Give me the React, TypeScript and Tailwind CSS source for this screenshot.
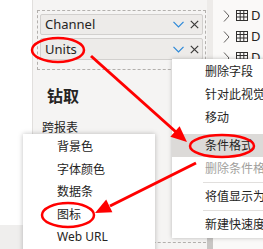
import React from "react";

const font = "font-['Noto_Sans','Noto_Sans_CJK_SC',sans-serif]";

function Chevron() {
  return (
    <svg width="11" height="7" viewBox="0 0 11 7" className="shrink-0">
      <path d="M0.5 0.8 L5.5 6 L10.5 0.8" fill="none" stroke="#2b88d8" strokeWidth="1.2" />
    </svg>
  );
}

function XIcon() {
  return (
    <svg width="9" height="9" viewBox="0 0 9 9" className="shrink-0">
      <path d="M0.8 0.8 L8.2 8.2 M8.2 0.8 L0.8 8.2" fill="none" stroke="#3b3a39" strokeWidth="1.2" />
    </svg>
  );
}

function Pill({ label, h }: { label: string; h: string }) {
  return (
    <div className={`flex items-center ${h} bg-[#edebe9] border border-[#d2d0ce] rounded-[2px] pl-[4px] pr-[3px]`}>
      <span className="text-[13px] leading-none text-[#252423] flex-1">{label}</span>
      <div className="flex items-center gap-[6px]">
        <Chevron />
        <XIcon />
      </div>
    </div>
  );
}

function TableIcon() {
  return (
    <svg width="12" height="11" viewBox="0 0 12 11" className="shrink-0">
      <rect x="0.5" y="0.5" width="11" height="10" fill="none" stroke="#323130" strokeWidth="1" />
      <path d="M0.5 3.5 H11.5 M0.5 7 H11.5 M4.2 0.5 V10.5 M7.8 0.5 V10.5" stroke="#323130" strokeWidth="1" />
    </svg>
  );
}

function FieldRow() {
  return (
    <div className="flex items-center h-[21px] pl-[10px]">
      <svg width="7" height="12" viewBox="0 0 7 12" className="shrink-0">
        <path d="M1 0.5 L6 6 L1 11.5" fill="none" stroke="#605e5c" strokeWidth="1" />
      </svg>
      <div className="ml-[6px]">
        <TableIcon />
      </div>
      <span className="ml-[3px] text-[13px] leading-none text-[#252423]">D</span>
    </div>
  );
}

function MenuItem({ label, active, disabled }: { label: string; active?: boolean; disabled?: boolean }) {
  return (
    <div
      className={`flex items-center h-[23px] pl-[33px] whitespace-nowrap text-[12px] leading-none ${
        active ? "bg-[#dcdad8]" : ""
      } ${disabled ? "text-[#a19f9d]" : "text-[#252423]"}`}
    >
      {label}
    </div>
  );
}

function Sep({ line }: { line?: boolean }) {
  return (
    <div className="h-[5px] flex items-center pl-[31px]">
      {line ? <div className="h-px w-full bg-[#e1dfdd]" /> : null}
    </div>
  );
}

function SubItem({ label }: { label: string }) {
  return (
    <div className="flex items-center h-[22.5px] pl-[34px] whitespace-nowrap text-[12px] leading-none text-[#252423]">
      {label}
    </div>
  );
}

export default function App() {
  return (
    <div className={`relative w-[263px] h-[249px] overflow-hidden bg-white flex ${font}`}>
      {/* left canvas strip */}
      <div className="w-[32px] shrink-0 flex flex-col">
        <div className="flex-1 bg-white" />
        <div className="h-[24px] bg-[#efeeed]" />
      </div>

      {/* visualizations panel */}
      <div className="w-[175px] shrink-0 border-l border-[#e1dfdd] bg-[#f5f4f3] flex flex-col pt-[10px]">
        <div className="ml-[4px] w-[169px] border border-dashed border-[#b3b0ad] pt-[3px] pb-[9px] px-[2px] flex flex-col gap-[3px]">
          <Pill label="Channel" h="h-[21px]" />
          <Pill label="Units" h="h-[22px]" />
        </div>
        <div className="ml-[14px] mt-[16px] text-[16px] leading-[20px] font-bold text-[#252423]">钻取</div>
        <div className="ml-[9px] mt-[14px] text-[12px] leading-[16px] text-[#252423]">跨报表</div>
        <div className="ml-[4px] mt-[106px] w-[169px] h-[20px] border-t border-dashed border-[#b3b0ad]" />
      </div>

      {/* scroll strip */}
      <div className="w-[6px] shrink-0 bg-[#edebe9] flex flex-col justify-end">
        <div className="h-[11px] bg-[#c8c6c4]" />
      </div>

      {/* fields panel */}
      <div className="flex-1 bg-[#faf9f8] flex flex-col pt-[5px]">
        <FieldRow />
        <FieldRow />
        <FieldRow />
      </div>

      {/* context menu */}
      <div className="absolute left-[172px] top-[59px] w-[140px] bg-white shadow-[0_0_4px_rgba(0,0,0,0.25)] pt-[1px] pb-[2px] flex flex-col">
        <MenuItem label="删除字段" />
        <MenuItem label="针对此视觉对象重命名" />
        <MenuItem label="移动" />
        <Sep />
        <MenuItem label="条件格式" active />
        <MenuItem label="删除条件格式" disabled />
        <Sep line />
        <MenuItem label="将值显示为" />
        <Sep line />
        <MenuItem label="新建快速度量值" />
      </div>

      {/* submenu */}
      <div className="absolute left-[23px] top-[134px] w-[132px] h-[130px] bg-white shadow-[0_0_5px_rgba(0,0,0,0.25)] pt-[1.75px] flex flex-col">
        <SubItem label="背景色" />
        <SubItem label="字体颜色" />
        <SubItem label="数据条" />
        <SubItem label="图标" />
        <SubItem label="Web URL" />
      </div>

      {/* red annotations */}
      <svg className="absolute left-0 top-0 pointer-events-none" width="263" height="249" viewBox="0 0 263 249">
        <ellipse cx="58" cy="50" rx="26" ry="12" fill="none" stroke="#ff0000" strokeWidth="2.5" />
        <ellipse cx="222" cy="146" rx="32" ry="11" fill="none" stroke="#ff0000" strokeWidth="2.5" />
        <ellipse cx="68" cy="215" rx="26" ry="12" fill="none" stroke="#ff0000" strokeWidth="2.5" />
        <line x1="91" y1="56" x2="176" y2="132" stroke="#ff0000" strokeWidth="3" />
        <polygon points="187,142 170.4,136.8 179.6,126.2" fill="#ff0000" />
        <line x1="196" y1="163" x2="110" y2="206" stroke="#ff0000" strokeWidth="3" />
        <polygon points="95,213 106.2,199.6 112.4,212.2" fill="#ff0000" />
      </svg>
    </div>
  );
}
